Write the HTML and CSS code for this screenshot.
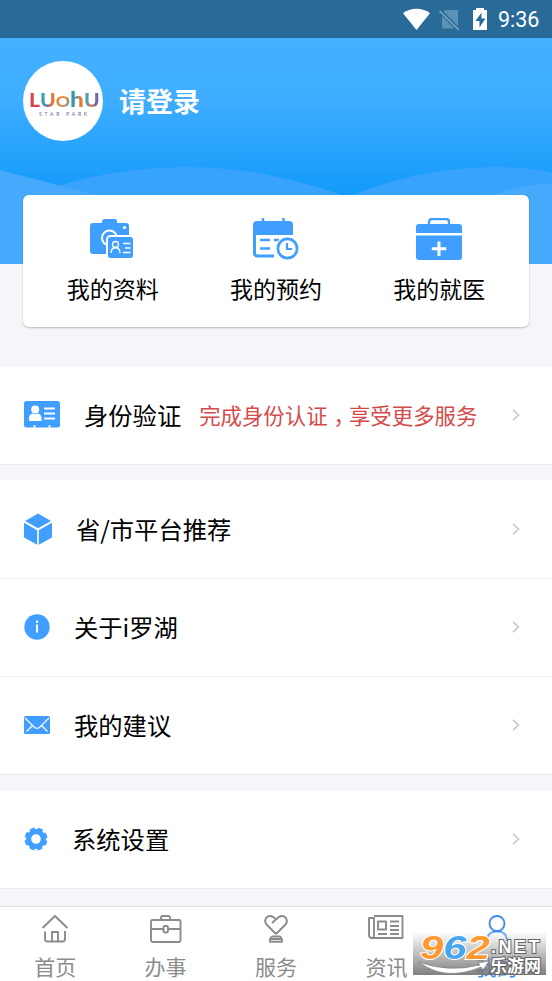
FILE: index.html
```html
<!DOCTYPE html>
<html lang="zh-CN">
<head>
<meta charset="utf-8">
<title>我的</title>
<link rel="stylesheet" href="styles.css">
</head>
<body>
<div class="app">
  <div class="status">
    <svg width="84" height="24" viewBox="0 0 84 24">
      <path d="M1 5.200C8 -.8 21 -.8 28 5.200L14.500 22z" fill="#fff"/>
      <path d="M43 2h13v18.500H40V5z" fill="#5c91b6"/>
      <path d="M38 3l19 19" stroke="#286b99" stroke-width="4"/>
      <path d="M37.500 3l19.500 19" stroke="#7fa9c5" stroke-width="1.500"/>
      <path d="M72 2h3V0h8v2h3v20H72z" fill="#fff" transform="translate(-1)"/>
      <path d="M79.500 4.500l-6 8.500h4v6.500l6-9h-4z" fill="#286b99"/>
    </svg>
    <span class="clock">9:36</span>
  </div>

  <header class="hero">
    <svg class="waves" width="552" height="98" viewBox="0 0 552 98">
      <path d="M0 20Q30 28 58 20Q118 1 192 1Q266 2 348 31Q420 1 494 1Q530 1 552 7V98H0z" fill="#37a3fc"/>
      <path d="M0 4L62 20Q120 34 160 50V98H0z" fill="#46a9fb"/>
      <path d="M552 18Q522 17 496 28L450 50V98H552z" fill="#46a9fb"/>
    </svg>
    <div class="profile">
      <div class="avatar">
        <div class="brand"><span class="a">L</span><span class="b">U</span><span class="c">O</span><span class="d">h</span><span class="e">U</span></div>
        <div class="brand-sub">STAR PARK</div>
      </div>
      <div class="login">请登录</div>
    </div>
  </header>

  <section class="quick">
    <div class="quick-item">
      <svg width="46" height="44" viewBox="1 0 46 44">
        <path d="M1 8q0-3 3-3h9V3q1-2 2-2h11q2 0 2 2v2h9q3 0 3 3v12H19v16H4q-3 0-3-3z" fill="#409eff"/>
        <circle cx="20.500" cy="20" r="7.500" fill="none" stroke="#fff" stroke-width="2"/>
        <circle cx="35.500" cy="9.500" r="1.600" fill="#fff"/>
        <rect x="18" y="18" width="27" height="23" rx="3.500" fill="#409eff" stroke="#fff" stroke-width="2"/>
        <g fill="none" stroke="#fff" stroke-width="1.300"><circle cx="26.500" cy="26.500" r="3"/><path d="M22 35q0-5 4.500-5.500Q31 30 31 35M34 25.500h7.500M36 30h5.500M34 34.500h7.500"/></g>
      </svg>
      <span>我的资料</span>
    </div>
    <div class="quick-item">
      <svg width="46" height="44" viewBox="0 0 46 44">
        <path d="M0 17V7q0-4 4-4h32q4 0 4 4v10z" fill="#409eff"/>
        <path d="M10 0v4M30.500 0v4" stroke="#409eff" stroke-width="2.500"/>
        <path d="M1.500 16v19q0 3 3 3H21" fill="none" stroke="#409eff" stroke-width="3"/>
        <path d="M7 22h10M21 22h5M7 30.500h10" stroke="#409eff" stroke-width="2.600"/>
        <circle cx="34.500" cy="30.500" r="12" fill="#fff"/>
        <circle cx="34.500" cy="30.500" r="9.600" fill="#fff" stroke="#409eff" stroke-width="2.700"/>
        <path d="M34 25v6h5" fill="none" stroke="#409eff" stroke-width="2.200"/>
      </svg>
      <span>我的预约</span>
    </div>
    <div class="quick-item">
      <svg width="46" height="44" viewBox="0 0 46 44">
        <path d="M13 7V4q0-3 3-3h14q3 0 3 3v3" fill="none" stroke="#409eff" stroke-width="2.300"/>
        <path d="M0 15V9q0-3 3-3h40q3 0 3 3v6zM0 17.500h46V39q0 3-3 3H3q-3 0-3-3z" fill="#409eff"/>
        <path d="M23 23.500V38M15.800 30.700h14.500" stroke="#fff" stroke-width="3"/>
      </svg>
      <span>我的就医</span>
    </div>
  </section>

  <section class="group">
    <div class="row">
      <svg class="icon-id" width="36" height="28" viewBox="0 0 36 28">
        <rect width="36" height="26.500" rx="2.500" fill="#409eff"/>
        <circle cx="11.200" cy="8.500" r="4" fill="#fff"/><path d="M5 20v-3q0-4 4-4.500l2.200 1 2.300-1q4 .5 4 4.500v3z" fill="#fff"/>
        <path d="M20 7.500h11M20 12.500h11M20 17.500h11" stroke="#fff" stroke-width="2"/>
        <path d="M10.500 24v4M25.500 24v4" stroke="#fff" stroke-width="1.700"/>
      </svg>
      <span class="label">身份验证</span><span class="hint">完成身份认证<span class="comma">，</span>享受更多服务</span>
      <svg class="chev" width="8" height="12" viewBox="0 0 8 12"><path d="M1 .8L6.500 6 1 11.200"/></svg>
    </div>
  </section>

  <section class="group">
    <div class="row first">
      <svg class="icon-cube" width="28" height="32" viewBox="0 0 28 32"><path d="M14 .5l13 7.500L14 15.300 1 8zM0 9.700l13.200 7.500V31.700L0 24.500zM28 9.700l-13.200 7.500V31.700L28 24.500z" fill="#409eff"/></svg>
      <span class="label">省/市平台推荐</span>
      <svg class="chev" width="8" height="12" viewBox="0 0 8 12"><path d="M1 .8L6.500 6 1 11.200"/></svg>
    </div>
    <div class="row">
      <svg class="icon" width="26" height="26" viewBox="0 0 26 26"><circle cx="13" cy="13" r="12.700" fill="#409eff"/><path d="M13 10.500V18.500" stroke="#fff" stroke-width="2"/><circle cx="13" cy="7.700" r="1.200" fill="#fff"/></svg>
      <span class="label">关于i罗湖</span>
      <svg class="chev" width="8" height="12" viewBox="0 0 8 12"><path d="M1 .8L6.500 6 1 11.200"/></svg>
    </div>
    <div class="row last">
      <svg class="icon" width="26" height="18" viewBox="0 0 26 18"><rect width="26" height="18" rx="1.500" fill="#409eff"/><path d="M1 2l9.500 9.500q2.500 1.500 5 0L25 2M2.500 15.500L8.500 9.500M23.500 15.500L17.500 9.500" fill="none" stroke="#fff" stroke-width="1.200"/></svg>
      <span class="label">我的建议</span>
      <svg class="chev" width="8" height="12" viewBox="0 0 8 12"><path d="M1 .8L6.500 6 1 11.200"/></svg>
    </div>
  </section>

  <section class="group">
    <div class="row last">
      <svg class="icon-gear" width="24" height="24" viewBox="0 0 24 24"><g fill="none" stroke="#409eff"><circle cx="12" cy="12" r="7.400" stroke-width="5.200"/><circle cx="12" cy="12" r="10.200" stroke-width="2.600" stroke-dasharray="5.200 2.811" stroke-dashoffset="-1.405"/></g></svg>
      <span class="label">系统设置</span>
      <svg class="chev" width="8" height="12" viewBox="0 0 8 12"><path d="M1 .8L6.500 6 1 11.200"/></svg>
    </div>
  </section>

  <nav class="tabs">
    <div class="tab">
      <svg width="36" height="30" viewBox="0 0 36 30"><path d="M5.500 14L18 2l12.500 12M8 17.500V25q0 2.500 2.500 2.500h15q2.500 0 2.500-2.500v-8M15 27.500V18h6v9.500"/></svg>
      <span>首页</span>
    </div>
    <div class="tab">
      <svg width="36" height="30" viewBox="0 0 36 30"><rect x="3" y="6" width="29.500" height="22" rx="1.500"/><path d="M13 6V3.500Q13 2 14.500 2h6Q22 2 22 3.500V6M3 15h12.500M20 15h12.500"/><rect x="15.500" y="12" width="4.500" height="6.500" rx="1.500"/></svg>
      <span>办事</span>
    </div>
    <div class="tab">
      <svg width="36" height="30" viewBox="0 0 36 30"><path d="M18 20L8.500 10.500Q5.500 6 9 3q4.500-3 9 2.500Q22.500 0 27 3q3.500 3 .5 7.500L18 20M14 9l4-3.500M14 22.500h8q2 1 1.500 2.500H12.500Q12 23.500 14 22.500M12 25v2.800h12V25"/></svg>
      <span>服务</span>
    </div>
    <div class="tab">
      <svg width="36" height="30" viewBox="0 0 36 30"><path d="M6 2h28.500v22H4Q1 24 1 21V4h5v18q0 2-2 2M22 7.500h9M22 12h9M22 16h9M10 20h9M22 20h9"/><rect x="10" y="7.500" width="8" height="8"/></svg>
      <span>资讯</span>
    </div>
    <div class="tab active">
      <svg width="36" height="30" viewBox="0 0 36 30"><circle cx="18" cy="9.500" r="7.500"/><path d="M8 27q0-9.500 10-9.500T28 27"/></svg>
      <span>我的</span>
    </div>
  </nav>

  <div class="mark">
    <svg class="swoosh" width="133" height="44" viewBox="0 0 133 44"><path d="M6 30Q35 41 67 33l-2-2 11-2-6 9-2-3Q32 50 6 30z" fill="#fff" stroke="#777" stroke-width=".6"/></svg>
    <div class="num"><span class="o">9</span><span class="s">6</span><span class="o">2</span></div>
    <div class="net">.NET</div>
    <div class="site">乐游网</div>
  </div>
</div>
</body>
</html>
```
FILE: styles.css
```css
* { box-sizing: border-box; }
body { margin: 0; font-family: "Noto Sans CJK SC", sans-serif; color: #000; background: #f5f6fa; }
svg { display: block; flex: none; }
.app { position: relative; width: 552px; height: 981px; overflow: hidden; display: flex; flex-direction: column; }

.status { height: 38px; flex: none; background: #286b99; display: flex; align-items: center; justify-content: flex-end; padding-right: 12px; padding-top: 1px; }
.status svg { width: 86px; margin-right: 11px; overflow: visible; }
.clock { font: 400 21.5px/24px Roboto, sans-serif; color: #fff; width: 42px; white-space: nowrap; }

.hero { position: relative; height: 226px; flex: none; background: linear-gradient(#43b1ff 0, #40aeff 25%, #129afa 70%); }
.waves { position: absolute; left: 0; bottom: 0; }
.profile { display: flex; align-items: center; padding: 23px 0 0 23px; gap: 16px; }
.avatar { width: 80px; height: 80px; border-radius: 50%; background: #fff; display: flex; flex-direction: column; align-items: center; padding-top: 28px; }
.brand { font: 900 18px/20px Lato, sans-serif; display: flex; align-items: baseline; width: 58px; justify-content: space-between; transform: scaleX(1.17); }
.brand .a { color: #d9454f; }
.brand .b { background: linear-gradient(90deg, #36a4b5 25%, #7c5bab 50%, #e27c35 75%); -webkit-background-clip: text; background-clip: text; color: transparent; }
.brand .c { font-size: 15px; background: linear-gradient(120deg, #ec8740 50%, #3fa9ad); -webkit-background-clip: text; background-clip: text; color: transparent; }
.brand .d { font-size: 21px; background: linear-gradient(90deg, #3a98ae 40%, #e27c35 70%); -webkit-background-clip: text; background-clip: text; color: transparent; }
.brand .e { background: linear-gradient(90deg, #4b9fb5 20%, #e7704a 50%, #6e6cae 75%); -webkit-background-clip: text; background-clip: text; color: transparent; }
.brand-sub { font: 5px/6px Lato, sans-serif; letter-spacing: 2.8px; color: #5a6a9a; white-space: nowrap; padding-left: 3px; }
.login { color: #fff; font-size: 27px; line-height: 38px; font-weight: 700; }

.quick { position: relative; width: 506px; height: 132px; margin: -69px 23px 40px; flex: none; display: grid; grid-template-columns: repeat(3, 1fr); background: #fff; border-radius: 6px; box-shadow: 0 1px 2px rgba(0,0,0,.25); padding: 23px 8px 0; }
.quick-item { display: flex; flex-direction: column; align-items: center; font-size: 23px; line-height: 32px; gap: 10px; }

.group { background: #fff; flex: none; margin-bottom: 15px; }
.group:nth-of-type(3) { margin-bottom: 16px; }
.row { height: 98px; display: flex; align-items: center; padding: 0 32px 1px 24px; border-bottom: 1px solid #e7e8ec; }
.first { height: 99px; }
.row:not(:last-child) { border-bottom-color: #efeff1; }
.label { font-size: 24.3px; line-height: 36px; margin-left: 24px; white-space: nowrap; }
.hint { font-size: 21.4px; line-height: 32px; color: #d54b4b; margin-left: 18px; white-space: nowrap; }
.comma { padding-left: 6px; margin-right: -6px; }
.chev { margin-left: auto; fill: none; stroke: #c8c9cc; stroke-width: 1.7; }

.tabs { position: absolute; left: 0; right: 0; bottom: 0; height: 75px; background: #fff; border-top: 1px solid #dedfe3; display: grid; grid-template-columns: repeat(5, 1fr); padding-top: 7px; }
.tab { display: flex; flex-direction: column; align-items: center; gap: 7px; color: #8b8b8b; font-size: 21px; line-height: 30px; }
.tab svg { fill: none; stroke: currentColor; stroke-width: 1.9; stroke-linejoin: round; }
.active { color: #3c8eea; }

.mark { position: absolute; left: 413px; top: 932px; width: 133px; height: 43px; background: linear-gradient(rgba(255,255,255,.35), rgba(110,110,110,.88)); }
.swoosh { position: absolute; left: 0; top: 0; }
.num { position: absolute; left: 7px; top: -3px; font: italic 700 34px/36px "Liberation Sans", sans-serif; display: flex; -webkit-text-stroke: 2px #fff; paint-order: stroke fill; transform: scaleX(1.23); transform-origin: 0 0; }
.num .o { color: #ff982f; }
.num .s { color: #47a7ee; }
.net { position: absolute; left: 78px; top: 4px; font: 700 18px/22px "Liberation Sans", sans-serif; letter-spacing: 2.5px; color: #fff; -webkit-text-stroke: 2px #666; paint-order: stroke fill; }
.site { position: absolute; left: 77px; top: 22px; font-size: 17px; line-height: 22px; font-weight: 700; color: #fff; -webkit-text-stroke: 2px #666; paint-order: stroke fill; white-space: nowrap; }
```
